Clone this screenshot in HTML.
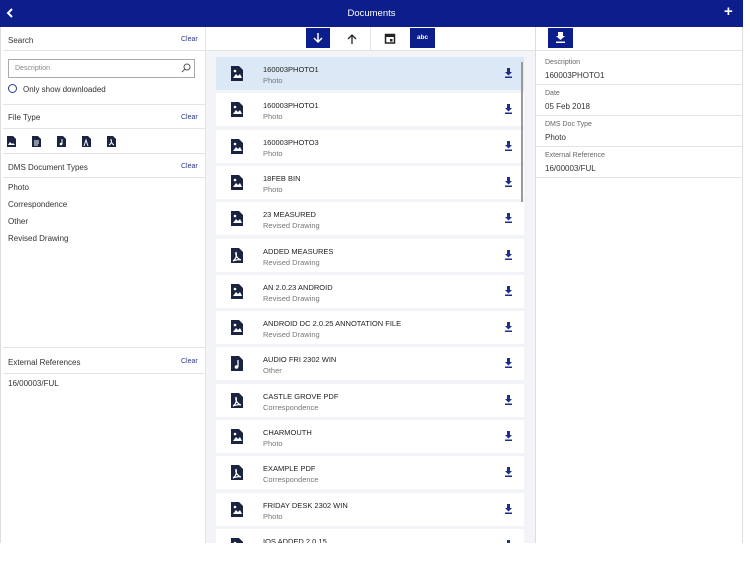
<!DOCTYPE html>
<html><head><style>
*{margin:0;padding:0;box-sizing:border-box}
body{width:750px;height:562px;background:#fff;font-family:"Liberation Sans",sans-serif;position:relative;overflow:hidden;color:#333}
.a{position:absolute}
.hd{left:0;top:0;width:743px;height:27px;background:#0b1e8c;color:#fff}
.t{font-size:8px;color:#333}
.g{font-size:7px;color:#666}
.clr{font-size:7px;color:#2a3a8f}
.hl{height:1px;background:#e2e4e8}
.card{left:216px;width:308px;height:33px;background:#fff}
.card .n{position:absolute;left:47px;top:8px;font-size:7.5px;color:#222}
.card .s{position:absolute;left:47px;top:19px;font-size:7.5px;color:#777}
.card svg.i{position:absolute;left:14px;top:9px}
.card svg.d{position:absolute;left:288px;top:11px}
</style></head><body>
<div class="a hd">
<svg class="a" style="left:6px;top:8px" width="8" height="10" viewBox="0 0 8 10"><path d="M6 1L2 5l4 4" stroke="#fff" stroke-width="2" fill="none"/></svg>
<div class="a" style="left:0;width:743px;top:8px;text-align:center;font-size:9.5px">Documents</div>
<div class="a" style="left:724px;top:3px;font-size:15px;font-weight:bold">+</div>
</div>
<div class="a" style="left:0;top:27px;width:1px;height:516px;background:#ddd"></div>
<div class="a" style="left:205px;top:27px;width:1px;height:516px;background:#e2e4e8"></div>
<div class="a t" style="left:8px;top:36px">Search</div><div class="a clr" style="left:181px;top:36px">Clear</div>
<div class="a hl" style="left:3px;top:50px;width:202px"></div>
<div class="a" style="left:8px;top:59px;width:187px;height:19px;border:1px solid #aaa"></div>
<div class="a g" style="left:15px;top:65px;color:#888">Description</div>
<svg class="a" style="left:181px;top:63px" width="10" height="10" viewBox="0 0 10 10"><circle cx="6" cy="4" r="3" stroke="#555" fill="none"/><path d="M4 6L1 9" stroke="#555"/></svg>
<div class="a" style="left:8px;top:84px;width:9px;height:9px;border:1.3px solid #2a3a8f;border-radius:50%"></div>
<div class="a t" style="left:23px;top:85px">Only show downloaded</div>
<div class="a hl" style="left:3px;top:104px;width:202px"></div>
<div class="a t" style="left:8px;top:113px">File Type</div><div class="a clr" style="left:181px;top:114px">Clear</div>
<div class="a hl" style="left:3px;top:128px;width:202px"></div>
<svg class="a" style="left:6px;top:136px" width="110" height="11" viewBox="0 0 110 11" fill="#1a2340">
<path d="M1 0h6l3 3v8H1z"/><path d="M2 9l2-3 2 2 1-1 2 2z" fill="#fff"/>
<g transform="translate(25,0)"><path d="M1 0h6l3 3v8H1z"/><path d="M3 5h5M3 7h5M3 9h4" stroke="#fff"/></g>
<g transform="translate(50,0)"><path d="M1 0h6l3 3v8H1z"/><path d="M6 3v5" stroke="#fff"/><circle cx="5" cy="8" r="1.3" fill="#fff"/></g>
<g transform="translate(75,0)"><path d="M1 0h6l3 3v8H1z"/><path d="M3 10l2-6 2 6" stroke="#fff" fill="none"/></g>
<g transform="translate(100,0)"><path d="M1 0h6l3 3v8H1z"/><path d="M3 9c2-1 3-3 2-6 0 3 1 5 3 6" stroke="#fff" fill="none"/></g>
</svg>
<div class="a hl" style="left:3px;top:153px;width:202px"></div>
<div class="a t" style="left:8px;top:163px">DMS Document Types</div><div class="a clr" style="left:181px;top:163px">Clear</div>
<div class="a hl" style="left:3px;top:177px;width:202px"></div>
<div class="a t" style="left:8px;top:183px">Photo</div>
<div class="a t" style="left:8px;top:200px">Correspondence</div>
<div class="a t" style="left:8px;top:217px">Other</div>
<div class="a t" style="left:8px;top:234px">Revised Drawing</div>
<div class="a hl" style="left:3px;top:347px;width:202px"></div>
<div class="a t" style="left:8px;top:358px">External References</div><div class="a clr" style="left:181px;top:358px">Clear</div>
<div class="a hl" style="left:3px;top:373px;width:202px"></div>
<div class="a t" style="left:8px;top:379px">16/00003/FUL</div>
<div class="a" style="left:206px;top:51px;width:329px;height:492px;background:#f3f4f7"></div>
<div class="a hl" style="left:206px;top:50px;width:329px"></div>
<div class="a" style="left:370px;top:27px;width:1px;height:23px;background:#e2e4e8"></div>
<div class="a" style="left:306px;top:28px;width:24px;height:20px;background:#0b1e8c"></div>
<svg class="a" style="left:312px;top:32px" width="12" height="12" viewBox="0 0 12 12"><path d="M6 1v9M2 6l4 4 4-4" stroke="#fff" stroke-width="1.5" fill="none"/></svg>
<svg class="a" style="left:346px;top:33px" width="12" height="12" viewBox="0 0 12 12"><path d="M6 11V2M2 6l4-4 4 4" stroke="#222" stroke-width="1.3" fill="none"/></svg>
<svg class="a" style="left:384px;top:32px" width="12" height="12" viewBox="0 0 12 12"><rect x="1.5" y="2.5" width="9" height="8.5" stroke="#222" stroke-width="1.5" fill="none"/><path d="M1.5 4h9" stroke="#222" stroke-width="2"/><rect x="6" y="7" width="2.5" height="2.5" fill="#222"/></svg>
<div class="a" style="left:410px;top:28px;width:25px;height:20px;background:#0b1e8c;color:#fff;font-size:6.5px;font-weight:bold;text-align:center;line-height:20px">abc</div>
<div class="a" style="left:535px;top:27px;width:1px;height:516px;background:#ddd"></div>
<div class="a" style="left:742px;top:27px;width:1px;height:516px;background:#ddd"></div>
<div class="a" style="left:548px;top:28px;width:25px;height:20px;background:#0b1e8c"></div>
<svg class="a" style="left:555px;top:32px" width="11" height="11" viewBox="0 0 11 11"><path d="M3 0h5v4h2L5.5 8 1 4h2z M1 9.5h9v1.5H1z" fill="#fff"/></svg>
<div class="a hl" style="left:536px;top:50px;width:206px"></div>
<div class="a g" style="left:545px;top:59px">Description</div><div class="a t" style="left:545px;top:71px">160003PHOTO1</div>
<div class="a hl" style="left:536px;top:84px;width:206px"></div>
<div class="a g" style="left:545px;top:90px">Date</div><div class="a t" style="left:545px;top:102px">05 Feb 2018</div>
<div class="a hl" style="left:536px;top:115px;width:206px"></div>
<div class="a g" style="left:545px;top:121px">DMS Doc Type</div><div class="a t" style="left:545px;top:133px">Photo</div>
<div class="a hl" style="left:536px;top:146px;width:206px"></div>
<div class="a g" style="left:545px;top:152px">External Reference</div><div class="a t" style="left:545px;top:164px">16/00003/FUL</div>
<div class="a hl" style="left:536px;top:177px;width:206px"></div>
<div id="list"></div>
<div class="a" style="left:521px;top:62px;width:2px;height:140px;background:#999;z-index:5"></div>
<script>
var rows=[["160003PHOTO1","Photo","i"],["160003PHOTO1","Photo","i"],["160003PHOTO3","Photo","i"],["18FEB BIN","Photo","i"],["23 MEASURED","Revised Drawing","i"],["ADDED MEASURES","Revised Drawing","p"],["AN 2.0.23 ANDROID","Revised Drawing","i"],["ANDROID DC 2.0.25 ANNOTATION FILE","Revised Drawing","i"],["AUDIO FRI 2302 WIN","Other","a"],["CASTLE GROVE PDF","Correspondence","p"],["CHARMOUTH","Photo","i"],["EXAMPLE PDF","Correspondence","p"],["FRIDAY DESK 2302 WIN","Photo","i"],["IOS ADDED 2.0.15","Photo","i"]];
var ic={i:'<path d="M1 0h8l4 4v11H1z" fill="#1a2340"/><path d="M3 12l3-4 2 2 2-2 2 4z" fill="#fff"/><circle cx="5" cy="5" r="1.3" fill="#fff"/>',
p:'<path d="M1 0h8l4 4v11H1z" fill="#1a2340"/><path d="M3 13c3-2 4-5 3-9-1 4 2 7 5 8-3-1-5 0-8 1z" stroke="#fff" stroke-width="1.2" fill="none"/>',
a:'<path d="M1 0h8l4 4v11H1z" fill="#1a2340"/><path d="M8 4v7" stroke="#fff" stroke-width="1.3"/><circle cx="6.5" cy="11" r="1.8" fill="#fff"/>'};
var h='';rows.forEach(function(r,k){var y=57+k*36.3;
h+='<div class="a card" style="top:'+y+'px;'+(k==0?'background:#dbe8f6':'')+'"><svg class="i" width="14" height="15" viewBox="0 0 14 15">'+ic[r[2]]+'</svg><div class="n">'+r[0]+'</div><div class="s">'+r[1]+'</div><svg class="d" width="9" height="10" viewBox="0 0 9 10"><path d="M3 0h3v4h2L4.5 7.5 1 4h2z M1 8.5h7V10H1z" fill="#1e2f8a"/></svg></div>';});
document.getElementById('list').innerHTML=h;
</script>
<div class="a" style="left:0;top:543px;width:750px;height:19px;background:#fff;z-index:6"></div>
</body></html>
